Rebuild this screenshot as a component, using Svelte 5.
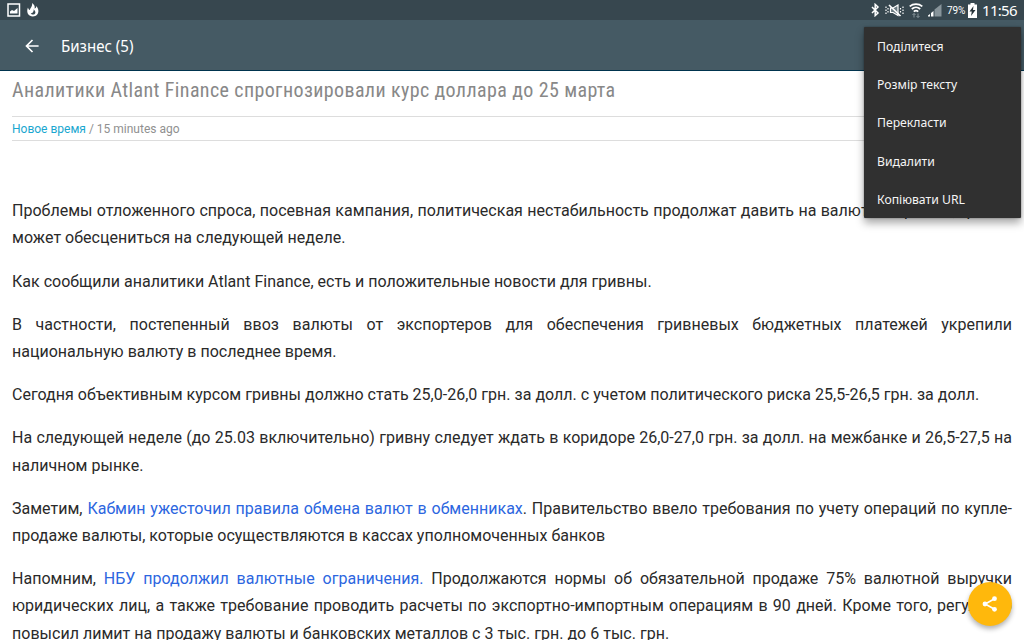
<script>
  let menu = ['Поділитеся', 'Розмір тексту', 'Перекласти', 'Видалити', 'Копіювати URL']

  // Each paragraph is a list of lines, a line is a list of text / link pieces
  let article = [
    [
      [{ text: 'Проблемы отложенного спроса, посевная кампания, политическая нестабильность продолжат давить на валютный рынок, гривна' }],
      [{ text: 'может обесцениться на следующей неделе.' }]
    ],
    [[{ text: 'Как сообщили аналитики Atlant Finance, есть и положительные новости для гривны.' }]],
    [
      [{ text: 'В частности, постепенный ввоз валюты от экспортеров для обеспечения гривневых бюджетных платежей укрепили' }],
      [{ text: 'национальную валюту в последнее время.' }]
    ],
    [[{ text: 'Сегодня объективным курсом гривны должно стать 25,0-26,0 грн. за долл. с учетом политического риска 25,5-26,5 грн. за долл.' }]],
    [
      [{ text: 'На следующей неделе (до 25.03 включительно) гривну следует ждать в коридоре 26,0-27,0 грн. за долл. на межбанке и 26,5-27,5 на' }],
      [{ text: 'наличном рынке.' }]
    ],
    [
      [{ text: 'Заметим, ' }, { text: 'Кабмин ужесточил правила обмена валют в обменниках', link: true }, { text: '. Правительство ввело требования по учету операций по купле-' }],
      [{ text: 'продаже валюты, которые осуществляются в кассах уполномоченных банков' }]
    ],
    [
      [{ text: 'Напомним, ' }, { text: 'НБУ продолжил валютные ограничения.', link: true }, { text: ' Продолжаются нормы об обязательной продаже 75% валютной выручки' }],
      [{ text: 'юридических лиц, а также требование проводить расчеты по экспортно-импортным операциям в 90 дней. Кроме того, регулятор' }],
      [{ text: 'повысил лимит на продажу валюты и банковских металлов с 3 тыс. грн. до 6 тыс. грн.' }]
    ]
  ]
</script>

<div class="screen">
  <div class="status">
    <svg class="picture" width="14" height="14" viewBox="0 0 14 14">
      <rect x="1" y="1" width="11.500" height="12" fill="none" stroke="#fff" stroke-width="1.500" />
      <path d="M3 10.500V8.500l2-1.500L7 8l3.500-3v5.500z" fill="#fff" />
    </svg>
    <svg class="flame" width="12" height="14" viewBox="0 0 12 14">
      <path d="M5 0c2.300 1.500 3.200 3.300 2.500 5.500C8.800 5.200 9.400 4.300 9.300 3c3.600 3.800 2.600 10.300-3.500 10.500C-.2 13.300-.5 7.500 1 4.500c.3 1.500.9 2.300 1.900 2.600C2.900 4.800 5.900 3.500 5 0z" fill="#fff" />
      <path d="M6.700 6.300c.6 1.200 1.900 1.900 1.700 3.400-.4 2.300-4 2.400-4.700.5 2 .2 3.200-1.400 3-3.900z" fill="#37474f" />
    </svg>
    <div class="tray">
      <svg width="9" height="14" viewBox="0 0 9 14" fill="none" stroke="#fff" stroke-width="1.500">
        <path d="M1 4l6 6-2.800 2.600V1.400L7 4l-6 6" />
      </svg>
      <svg width="19" height="13" viewBox="0 0 19 13" fill="none" stroke="#fff">
        <path d="M5.500 4H8l5-3v10.500L8 8.500H5.500z" fill="#6b7a81" stroke="#fff" stroke-width="1.200" />
        <path d="M4 1l11.500 11" stroke-width="1.700" />
        <path d="M1 2.500V4M1 5.500V7M1 8.500V10M3 4v1.500M3 7v1.500M15.500 4v1.500M15.500 7v1.500M18 2.500V4M18 5.500V7M18 8.500V10" stroke-width="1.200" />
      </svg>
      <svg width="14" height="15" viewBox="0 0 14 15" fill="none" stroke="#fff" stroke-width="1.700">
        <path d="M.7 3.300c3.600-3 9-3 12.600 0M2.800 6c2.400-2.200 6-2.200 8.400 0M4.800 8.700c1.300-1.300 3.100-1.300 4.400 0" />
        <path d="M5 14.500v-4M3.500 12L5 10.500 6.500 12M9 10.500v4M7.500 13L9 14.500l1.500-1.500" stroke="#87949a" stroke-width="1" />
      </svg>
      <svg width="14" height="14" viewBox="0 0 14 14">
        <path d="M0 13.500h2V11L0 12.500zM3 13.500h2.500V8L3 10z" fill="#fff" />
        <path d="M6.500 13.500V6.500L13.500 1v12.500z" fill="#87949a" />
      </svg>
      <span class="percent">79%</span>
      <svg class="battery" width="9" height="15" viewBox="0 0 9 15">
        <path d="M2.500 0h4v1.500H9V15H0V1.500h2.500z" fill="#fff" />
        <path d="M5.500 3L1.500 8.500h2.300L3 13l4.500-6H5z" fill="#263238" />
      </svg>
      <span class="clock">11:56</span>
    </div>
  </div>

  <header>
    <svg width="14" height="14" viewBox="0 0 14 14" fill="none" stroke="#fff" stroke-width="1.700">
      <path d="M13.600 7H2M7.500 1L1.500 7l6 6" />
    </svg>
    <h1>Бизнес (5)</h1>
  </header>

  <main>
    <h2>Аналитики Atlant Finance спрогнозировали курс доллара до 25 марта</h2>
    <div class="meta"><a href="#source">Новое время</a> / 15 minutes ago</div>
    <article>
      {#each article as lines}
        <p>
          {#each lines as line, i}
            <span class="line" class:full={i < lines.length - 1}>{#each line as part}{#if part.link}<a href="#more">{part.text}</a>{:else}{part.text}{/if}{/each}</span>
          {/each}
        </p>
      {/each}
    </article>
  </main>

  <ul class="menu">
    {#each menu as item}
      <li><span>{item}</span></li>
    {/each}
  </ul>

  <button class="share" aria-label="Share">
    <svg width="16" height="18" viewBox="0 0 16 18">
      <path d="M12.500 3.700L3.200 9l9.300 5.300" fill="none" stroke="#fff" stroke-width="1.600" />
      <circle cx="12.500" cy="3.700" r="2.400" fill="#fff" />
      <circle cx="3" cy="9" r="2.400" fill="#fff" />
      <circle cx="12.500" cy="14.300" r="2.400" fill="#fff" />
    </svg>
  </button>
</div>

<style>
  .screen {
    position: relative;
    width: 1024px;
    height: 640px;
    overflow: hidden;
    background: #fff;
    font-family: Roboto, sans-serif;
  }

  .status {
    display: flex;
    align-items: center;
    height: 20px;
    padding: 0 7px;
    background: #37474f;
    color: #fff;
  }
  .flame {
    margin-left: 6px;
  }
  .tray {
    display: flex;
    align-items: center;
    margin-left: auto;
    gap: 5px;
  }
  .percent {
    width: 18px;
    font-size: 10px;
    letter-spacing: -0.1px;
  }
  .battery {
    margin-left: -2px;
  }
  .clock {
    width: 35px;
    font: 15px/20px "Noto Sans", sans-serif;
    letter-spacing: -0.7px;
    white-space: nowrap;
  }

  header {
    display: flex;
    align-items: center;
    box-sizing: border-box;
    height: 51px;
    padding: 1px 25px 0;
    gap: 22px;
    background: #455a64;
    border-bottom: 1px solid #00344e;
  }
  h1 {
    margin: 0;
    color: #fff;
    font: 400 16px/20px "Noto Sans", sans-serif;
    transform: scaleX(0.94);
    transform-origin: left;
  }

  main {
    padding: 0 12px;
  }
  h2 {
    margin: 0;
    padding-top: 6px;
    height: 39px;
    color: #888;
    font: 400 20px/26px "Roboto Condensed", Roboto, sans-serif;
    font-stretch: 75%;
    letter-spacing: 0.38px;
    white-space: nowrap;
  }
  .meta {
    height: 23px;
    border-top: 1px solid #ddd;
    border-bottom: 1px solid #ddd;
    color: #909090;
    font-size: 12px;
    line-height: 24px;
  }
  a {
    color: #2c66e0;
    text-decoration: none;
  }
  .meta a {
    color: #1aa7d0;
  }

  article {
    padding-top: 56.2px;
    color: #2a2a2a;
    font-size: 16px;
    line-height: 27.2px;
    letter-spacing: 0.015px;
  }
  p {
    margin: 0 0 16px;
  }
  .line {
    display: block;
    white-space: nowrap;
  }
  .full {
    text-align: justify;
    text-align-last: justify;
    white-space: normal;
  }

  .menu {
    position: absolute;
    top: 27px;
    left: 864px;
    width: 157px;
    height: 191px;
    box-sizing: border-box;
    margin: 0;
    padding: 0;
    list-style: none;
    background: #303030;
    border-radius: 1px;
    box-shadow: 0 5px 9px rgba(0, 0, 0, 0.35), 0 0 2px rgba(0, 0, 0, 0.4);
  }
  li {
    display: flex;
    align-items: center;
    height: 37.4px;
    padding: 0 0 1px 13px;
    color: #f5f5f5;
    font: 400 13px/20px "Noto Sans", sans-serif;
  }
  li span {
    transform: scaleX(0.94);
    transform-origin: left;
    white-space: nowrap;
  }

  .share {
    position: absolute;
    left: 968px;
    top: 582px;
    width: 44px;
    height: 44px;
    display: flex;
    align-items: center;
    justify-content: center;
    padding: 0;
    border: 0;
    border-radius: 50%;
    background: #ffb80c;
    box-shadow: 0 3px 5px rgba(0, 0, 0, 0.3);
  }
</style>
